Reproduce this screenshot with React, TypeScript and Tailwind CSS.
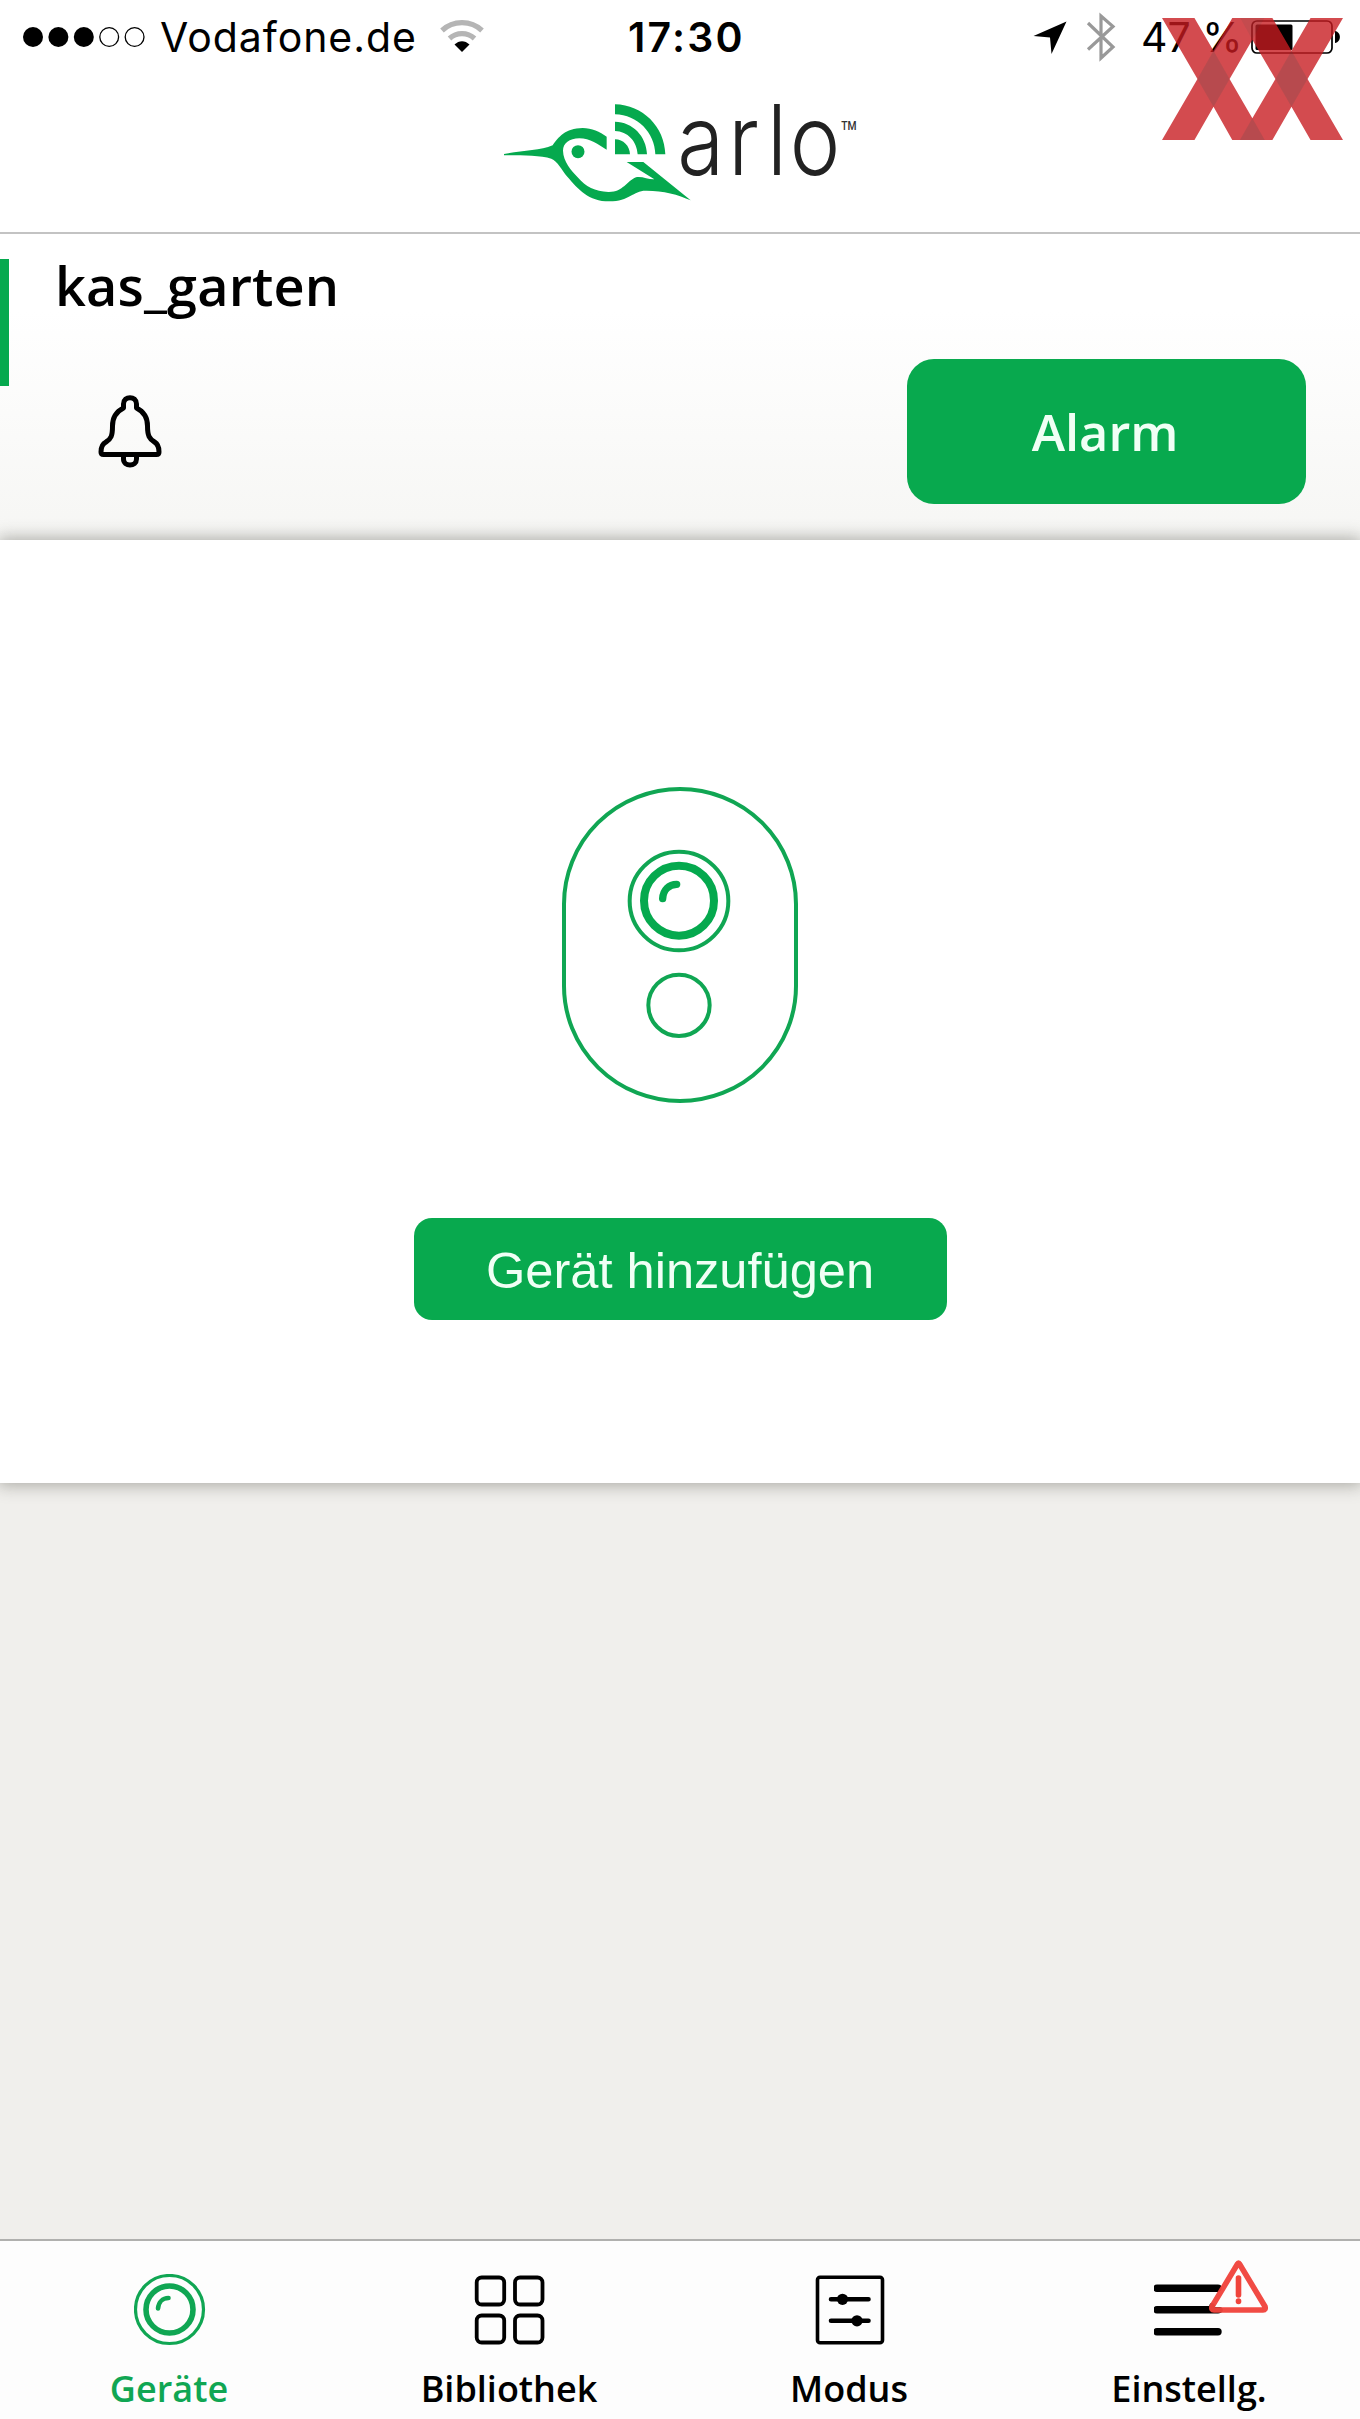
import type { ReactNode } from "react";
import { clsx } from "clsx";

// Cellular signal, filled dots = strength
const SignalDots = ({ level }: { level: number }) => (
  <svg width="126" height="24" viewBox="0 0 126 24">
    {[0, 1, 2, 3, 4].map((i) => (
      <circle
        key={i}
        cx={12 + i * 25.4}
        cy="12"
        r={i < level ? 10 : 9.4}
        fill={i < level ? "#000" : "none"}
        stroke={i < level ? "none" : "#000"}
        strokeWidth="1.3"
      />
    ))}
  </svg>
);

const WifiIcon = () => (
  <svg width="46" height="34" viewBox="0 0 46 34" fill="none">
    <path d="M3 11.5C14 1 32 1 43 11.5" stroke="#b5b5b5" strokeWidth="5.2" />
    <path d="M10.5 19.5C17.5 13 28.5 13 35.5 19.5" stroke="#b5b5b5" strokeWidth="5.2" />
    <path d="M15.5 25.5C20 21 26 21 30.5 25.5L23 33Z" fill="#000" />
  </svg>
);

const LocationIcon = () => (
  <svg width="34" height="34" viewBox="0 0 34 34">
    <path d="M33.5 0.5L18.5 33L17 16.5L0.5 15Z" fill="#000" />
  </svg>
);

const BluetoothIcon = () => (
  <svg width="30" height="50" viewBox="0 0 30 50" fill="none">
    <path
      d="M2 11L27 35L15 46V4L27 14.5L2 37.5"
      stroke="#999"
      strokeWidth="3.2"
    />
  </svg>
);

const BatteryIcon = () => (
  <svg width="90" height="34" viewBox="0 0 90 34">
    <rect x="1" y="1" width="80" height="32" rx="5" fill="none" stroke="#000" strokeWidth="1.7" />
    <rect x="4.5" y="4.5" width="37" height="25.5" rx="1.5" fill="#000" />
    <path d="M84 11C90.500 12 90.500 22 84 23Z" fill="#000" />
  </svg>
);

const Watermark = () => (
  <svg
    className="absolute left-[1162px] top-[18px]"
    width="181"
    height="122"
    viewBox="0 0 541 364"
    preserveAspectRatio="none"
  >
    <path
      d="M0 0H97L154 98L210 0H330L387 98L444 0H541L435 182L541 364H444L387 265L330 364H210L154 265L97 364H0L106 182ZM202 182L270 299L339 182L270 65Z"
      fill="rgba(199,27,32,0.79)"
      fillRule="evenodd"
    />
    <g fill="rgba(25,75,77,0.15)">
      <path d="M154 98L202 182L154 265L106 182Z" />
      <path d="M387 98L435 182L387 265L339 182Z" />
      <path d="M234 0H306L270 65Z" fill="rgba(25,75,77,0.08)" />
      <path d="M270 299L307 364H233Z" />
    </g>
  </svg>
);

const ArloLogo = () => (
  <svg className="ml-[490px]" width="400" height="152" viewBox="0 0 1200 456">
    <g fill="#05a94e">
      <path
        fillRule="evenodd"
        d="M42 222C95 211 150 212 188 196C205 172 225 145 278 144C305 144 330 156 350 170V209C325 194 300 175 268 175C238 176 219 190 219 212C220 245 243 270 263 292C287 320 315 335 355 336C400 337 410 303 438 292C455 288 475 299 493 298L410 246H460L602 361C565 344 520 332 470 332C430 330 420 364 358 364C295 364 265 328 232 290C215 270 203 244 184 236C150 226 95 226 42 226Z"
      />
      <circle cx="264" cy="215" r="19.500" />
      <path d="M375 178C400 178 419 198 420 223H375Z" />
      <path d="M375 125C428 126 469 168 471 223H443C441 184 413 154 375 153Z" />
      <path d="M375 73C458 75 524 140 526 223H496C494 158 443 105 375 103Z" />
    </g>
    <text
      x="646 822 955 1034"
      y="285"
      fontSize="294"
      transform="scale(0.87 1)"
      className="fill-[#222] font-['Inter','Open_Sans',sans-serif] font-[260]"
    >
      arlo
    </text>
    <text x="1054" y="149" fontSize="36" className="fill-[#333] font-['Roboto',sans-serif] font-medium" textLength="46" lengthAdjust="spacingAndGlyphs">
      TM
    </text>
  </svg>
);

const BellIcon = () => (
  <svg width="66" height="76" viewBox="0 0 66 76" fill="none" stroke="#000" strokeWidth="5">
    <path
      strokeLinejoin="round"
      d="M25.500 14V10C25.500 1.500 38.500 1.500 38.500 10V14C46.500 18 49.500 25 49.500 32C49.500 42 51.500 45 56.500 48C60 50 61 53 61 58Q61 60.500 58.500 60.500H5.500Q3 60.500 3 58C3 53 4 50 8 48C13 45 14.500 42 14.500 32C14.500 25 17.500 18 25.500 14Z"
    />
    <path d="M25.500 61V65C25.500 73 38.500 73 38.500 65V61" />
  </svg>
);

const CameraIcon = () => (
  <svg
    width="280"
    height="320"
    viewBox="0 0 840 960"
    fill="none"
    stroke="#10a653"
    strokeWidth="12"
  >
    <rect x="72" y="6" width="696" height="936" rx="348" ry="345" />
    <circle cx="417" cy="342" r="148" />
    <circle cx="417" cy="341" r="105" stroke="#05a94e" strokeWidth="24" />
    <path d="M368 335C369 309 387 292 410 292" stroke="#05a94e" strokeWidth="22" strokeLinecap="round" />
    <circle cx="417" cy="655" r="92" />
  </svg>
);

const LensIcon = () => (
  <svg width="72" height="72" viewBox="0 0 72 72" fill="none" stroke="#10a653">
    <circle cx="35.500" cy="35.500" r="34" strokeWidth="3.2" />
    <circle cx="35.500" cy="35.500" r="23.500" strokeWidth="5.6" />
    <path d="M24 34.500C24.500 28.500 28.500 24 34.500 24" strokeWidth="4.600" strokeLinecap="round" />
  </svg>
);

const LibraryIcon = () => (
  <svg width="72" height="72" viewBox="0 0 72 72" fill="none" stroke="#000" strokeWidth="3.8">
    <rect x="2.700" y="3.500" width="27.500" height="27" rx="5" />
    <rect x="41" y="3.500" width="27.500" height="27" rx="5" />
    <rect x="2.700" y="41.500" width="27.500" height="27" rx="5" />
    <rect x="41" y="41.500" width="27.500" height="27" rx="5" />
  </svg>
);

const ModeIcon = () => (
  <svg width="72" height="72" viewBox="0 0 72 72" fill="none" stroke="#000">
    <rect x="3.500" y="3.300" width="65" height="65.500" rx="2.500" strokeWidth="3.6" />
    <path d="M17 25.300H54.500M17 46.800H54.500" strokeWidth="4.6" strokeLinecap="round" />
    <circle cx="28.500" cy="25.300" r="5.600" fill="#000" stroke="none" />
    <circle cx="43" cy="46.800" r="5.600" fill="#000" stroke="none" />
  </svg>
);

const MenuIcon = () => (
  <div className="relative">
    <svg width="72" height="72" viewBox="0 0 72 72" stroke="#000" strokeWidth="7.4" strokeLinecap="round">
      <path d="M3 14.300H64M3 35.800H64M3 57.700H64" />
    </svg>
    {/* Warning badge */}
    <svg
      className="absolute -top-[15px] left-[54px]"
      width="62"
      height="56"
      viewBox="0 0 62 56"
      fill="none"
      stroke="#f0443c"
      strokeWidth="5.6"
      strokeLinecap="round"
      strokeLinejoin="round"
    >
      <path d="M28.700 5.500Q30.500 2.500 32.300 5.500L57 47Q58.500 51 55 51H6Q2.500 51 4 47Z" fill="#fdfdfd" stroke="none" />
      <path d="M4 47Q2.500 51 6 51H12" stroke="#000" />
      <path d="M29.500 5Q30.500 3 31.500 5L57 47.500Q58 51 55 51H6Q3 51 4 47.500Z" strokeOpacity="0.96" />
      <path d="M30.500 19V36" />
      <path d="M30.500 42V42.500" />
    </svg>
  </div>
);

interface Tab {
  name: string;
  icon: ReactNode;
  active?: boolean;
}

const tabs: Tab[] = [
  { name: "Geräte", icon: <LensIcon />, active: true },
  { name: "Bibliothek", icon: <LibraryIcon /> },
  { name: "Modus", icon: <ModeIcon /> },
  { name: "Einstellg.", icon: <MenuIcon /> },
];

const StatusBar = () => (
  <div className="flex h-20 items-start font-['Inter','Liberation_Sans',sans-serif] leading-[75px] text-black">
    <div className="flex w-[628px] pl-[21px]">
      <div className="pt-[25px]">
        <SignalDots level={3} />
      </div>
      <span className="ml-[13px] w-[255px] whitespace-nowrap text-[41px] tracking-[0.95px]">
        Vodafone.de
      </span>
      <div className="ml-[24px] pt-[19px]">
        <WifiIcon />
      </div>
    </div>
    <span className="w-[405px] text-[41px] font-semibold tracking-[2.2px]">17:30</span>
    <div className="pt-[21px]">
      <LocationIcon />
    </div>
    <div className="ml-[19px] pt-[12px]">
      <BluetoothIcon />
    </div>
    <span className="ml-[25px] w-[110px] whitespace-nowrap text-[41px]">47 %</span>
    <div className="pt-[20px]">
      <BatteryIcon />
    </div>
  </div>
);

export default function App() {
  return (
    <div className="relative flex h-[2419px] w-[1360px] flex-col overflow-hidden bg-[#f0efec] font-['Open_Sans','Noto_Sans',sans-serif]">
      <header className="h-[234px] shrink-0 border-b-2 border-[#c3c3c3] bg-white">
        <StatusBar />
        <ArloLogo />
      </header>

      {/* Base station */}
      <section className="flex h-[306px] shrink-0 bg-linear-to-b from-white from-25% to-[#f6f6f4] pt-[25px]">
        <div className="h-[127px] w-[9px] bg-[#05a94e]" />
        <div className="flex-1 pl-[46px]">
          <h1 className="-mt-px text-[54px] leading-[54px] font-semibold tracking-[0.15px] text-black">
            kas_garten
          </h1>
          <div className="mt-[82px] ml-[43px]">
            <BellIcon />
          </div>
        </div>
        <button className="mt-[100px] mr-[54px] h-[145px] w-[399px] rounded-[27px] bg-[#08a94e] pr-[3px] text-[50.5px] font-semibold text-[#f0fff5]">
          Alarm
        </button>
      </section>

      <section className="flex h-[943px] shrink-0 flex-col items-center bg-white pt-[247px] shadow-[0_0_16px_2px_rgba(60,60,50,0.4)]">
        <CameraIcon />
        <button className="mt-[111px] h-[102px] w-[533px] rounded-[18px] bg-[#08a94e] pt-[3px] font-['Liberation_Sans',sans-serif] text-[50.6px] text-[#f0fff5]">
          Gerät hinzufügen
        </button>
      </section>

      <nav className="mt-auto grid h-[180px] grid-cols-4 border-t-2 border-[#b0b0ae] bg-[#fdfdfd]">
        {tabs.map((tab) => (
          <button key={tab.name} className="flex flex-col items-center pt-[33px]">
            {tab.icon}
            <span
              className={clsx(
                "mt-[18px] mr-[2px] text-[36px] leading-[50px] font-semibold",
                tab.active ? "text-[#10a653]" : "text-black"
              )}
            >
              {tab.name}
            </span>
          </button>
        ))}
      </nav>

      <Watermark />
    </div>
  );
}
